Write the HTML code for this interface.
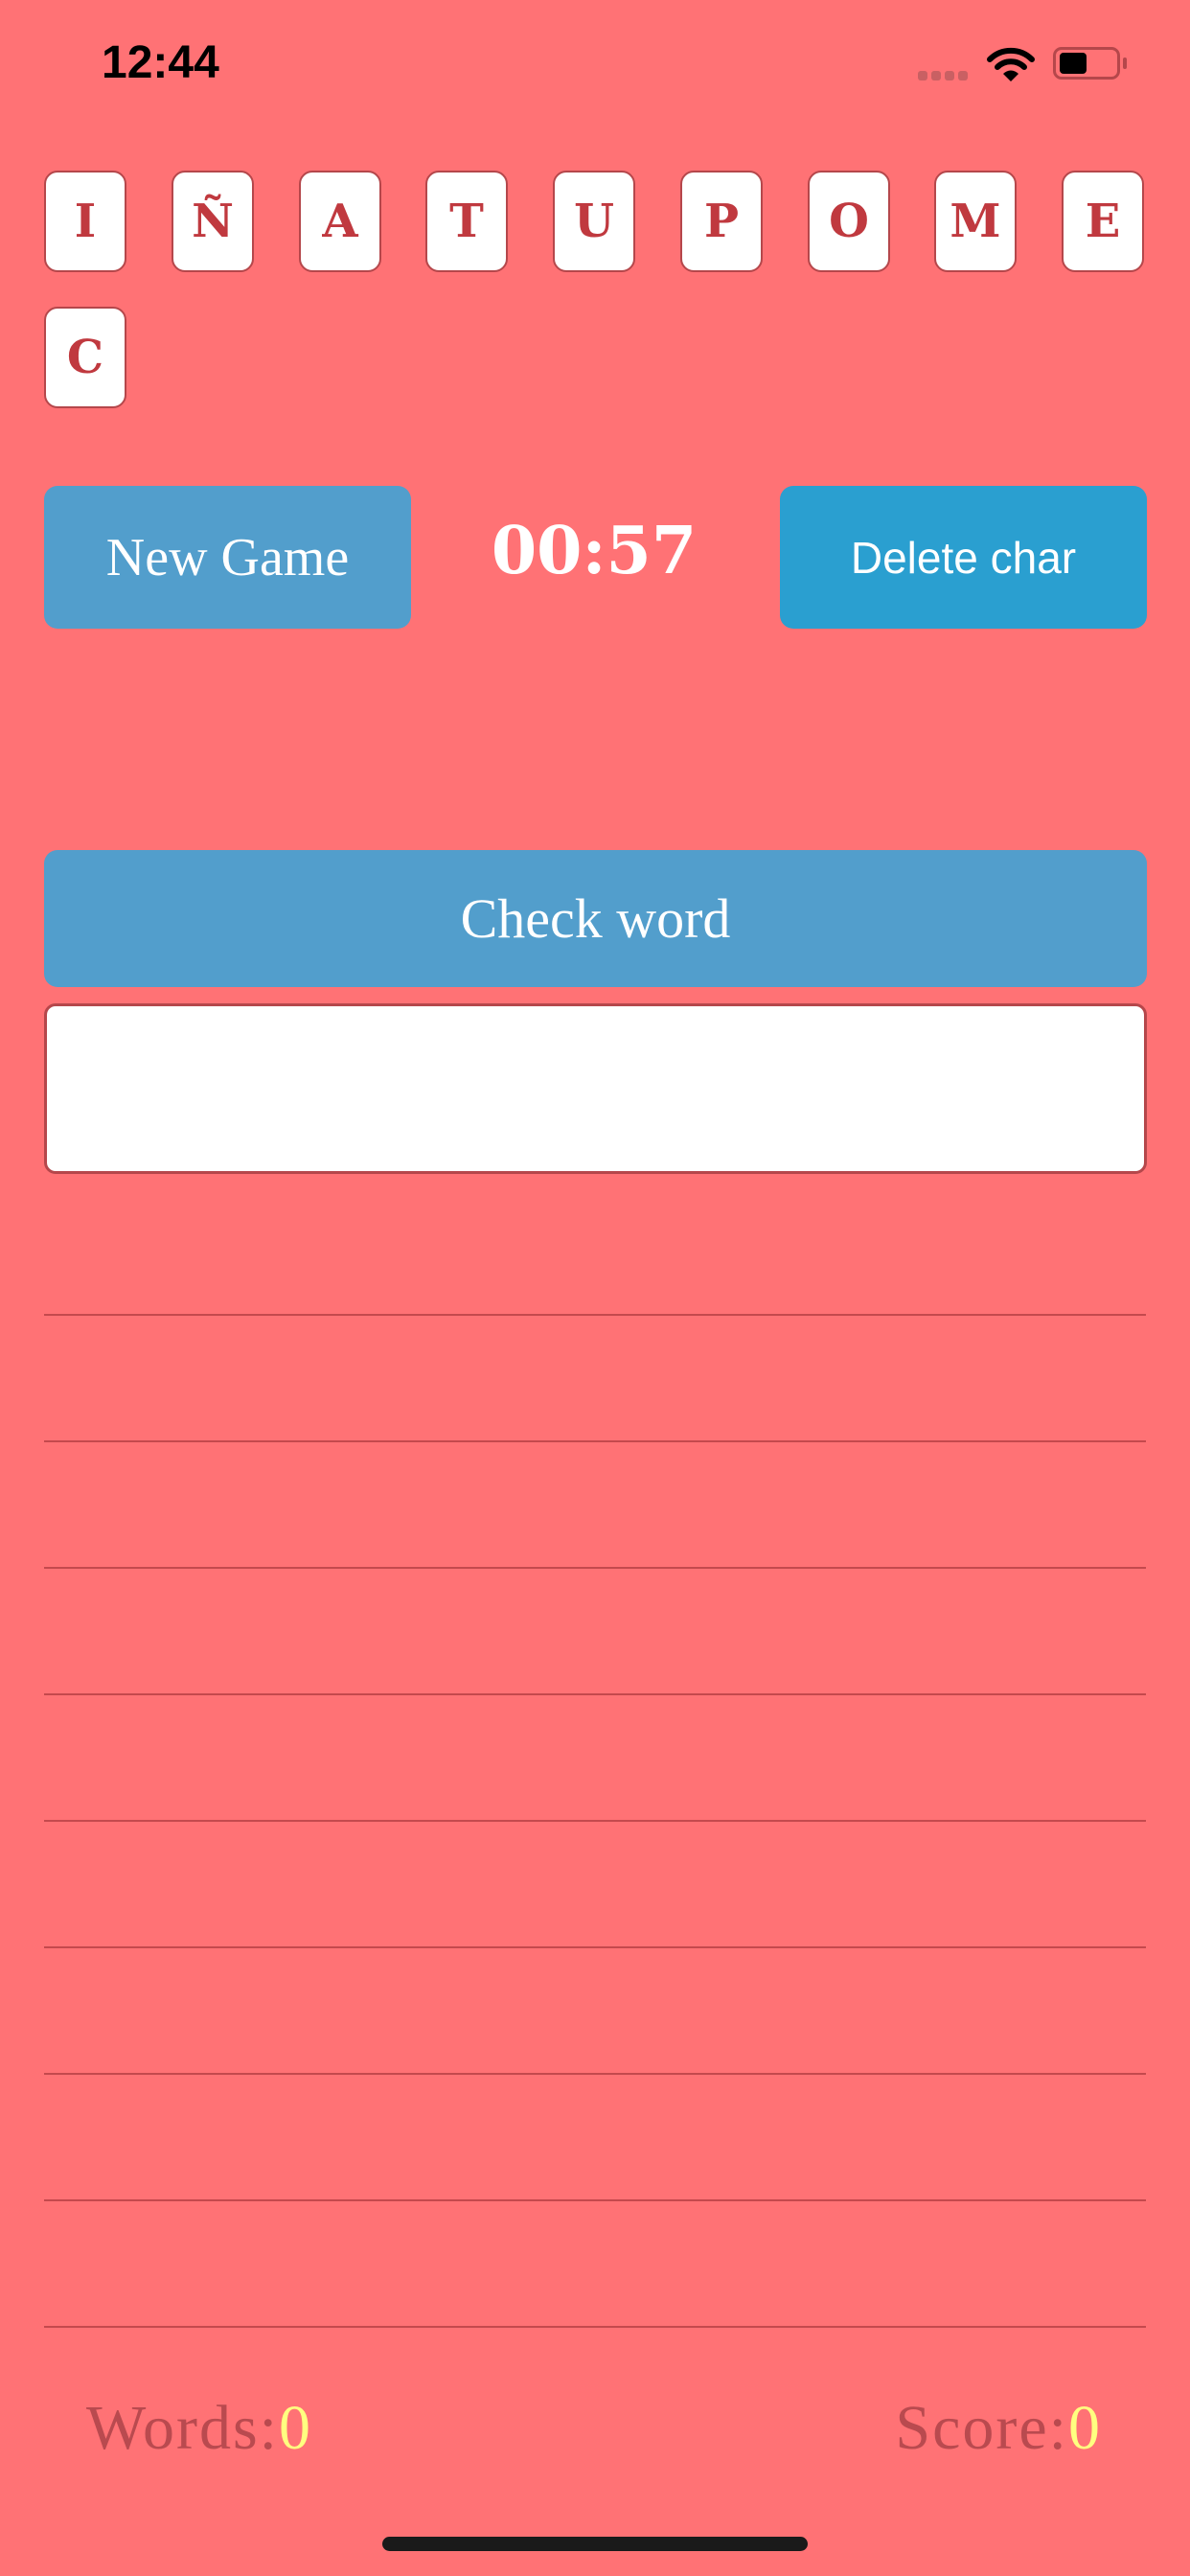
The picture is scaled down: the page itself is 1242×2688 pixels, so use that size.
<!DOCTYPE html>
<html><head><meta charset="utf-8"><style>
body{margin:0;width:1242px;height:2688px;background:#FF7275;position:relative;overflow:hidden;font-family:"Liberation Serif",serif}
.a{position:absolute}
.tile{position:absolute;width:86px;height:106px;background:#fff;border:2px solid #B5474B;border-radius:14px;box-sizing:border-box;display:flex;align-items:center;justify-content:center;font-family:"DejaVu Serif",serif;font-weight:bold;font-size:48px;color:#C0393F}
.btn{position:absolute;border-radius:14px;color:#fff;display:flex;align-items:center;justify-content:center}
.line{position:absolute;left:46px;width:1150px;height:2px;background:#C4494D}
</style></head><body>
<div class="a" style="left:106px;top:38px;font:bold 48px 'Liberation Sans',sans-serif;color:#000">12:44</div>
<div class="a" style="left:958px;top:74px;width:54px;height:10px;display:flex;gap:4px">
<div style="width:10px;height:10px;border-radius:3px;background:#C96063"></div><div style="width:10px;height:10px;border-radius:3px;background:#C96063"></div><div style="width:10px;height:10px;border-radius:3px;background:#C96063"></div><div style="width:10px;height:10px;border-radius:3px;background:#C96063"></div></div>
<svg class="a" style="left:1030px;top:48px" width="50" height="38" viewBox="0 0 50 38"><path d="M3 14 A31 31 0 0 1 47 14" stroke="#000" stroke-width="6" fill="none" stroke-linecap="round"/><path d="M11 22 A20 20 0 0 1 39 22" stroke="#000" stroke-width="6" fill="none" stroke-linecap="round"/><path d="M25 37 L17 29 A11 11 0 0 1 33 29 Z" fill="#000"/></svg>
<div class="a" style="left:1099px;top:49px;width:70px;height:34px;border:3px solid #B5474B;border-radius:9px;box-sizing:border-box"></div>
<div class="a" style="left:1106px;top:55px;width:28px;height:22px;border-radius:4px;background:#000"></div>
<div class="a" style="left:1172px;top:60px;width:4px;height:12px;border-radius:2px;background:#B5474B"></div>

<div class="tile" style="left:46px;top:178px">I</div>
<div class="tile" style="left:179px;top:178px">Ñ</div>
<div class="tile" style="left:312px;top:178px">A</div>
<div class="tile" style="left:444px;top:178px">T</div>
<div class="tile" style="left:577px;top:178px">U</div>
<div class="tile" style="left:710px;top:178px">P</div>
<div class="tile" style="left:843px;top:178px">O</div>
<div class="tile" style="left:975px;top:178px">M</div>
<div class="tile" style="left:1108px;top:178px">E</div>
<div class="tile" style="left:46px;top:320px">C</div>

<div class="btn" style="left:46px;top:507px;width:383px;height:149px;background:#529ECC;font-size:56px">New Game</div>
<div class="a" style="left:470px;top:535px;width:300px;text-align:center;font:bold 68px 'DejaVu Serif',serif;color:#fff">00:57</div>
<div class="btn" style="left:814px;top:507px;width:383px;height:149px;background:#2A9FD0;font:46px 'Liberation Sans',sans-serif">Delete char</div>

<div class="btn" style="left:46px;top:887px;width:1151px;height:143px;background:#529ECC;font-size:58px">Check word</div>
<div class="a" style="left:46px;top:1047px;width:1151px;height:178px;background:#fff;border:3px solid #B5474B;border-radius:12px;box-sizing:border-box"></div>

<div class="line" style="top:1371px"></div>
<div class="line" style="top:1503px"></div>
<div class="line" style="top:1635px"></div>
<div class="line" style="top:1767px"></div>
<div class="line" style="top:1899px"></div>
<div class="line" style="top:2031px"></div>
<div class="line" style="top:2163px"></div>
<div class="line" style="top:2295px"></div>
<div class="line" style="top:2427px"></div>

<div class="a" style="left:90px;top:2496px;font-size:66px;letter-spacing:2px;color:#B94A4F">Words:<span style="color:#FFFF80">0</span></div>
<div class="a" style="right:92px;top:2496px;font-size:66px;letter-spacing:2px;color:#B94A4F">Score:<span style="color:#FFFF80">0</span></div>
<div class="a" style="left:399px;top:2647px;width:444px;height:15px;border-radius:8px;background:#1a1a1a"></div>
</body></html>
